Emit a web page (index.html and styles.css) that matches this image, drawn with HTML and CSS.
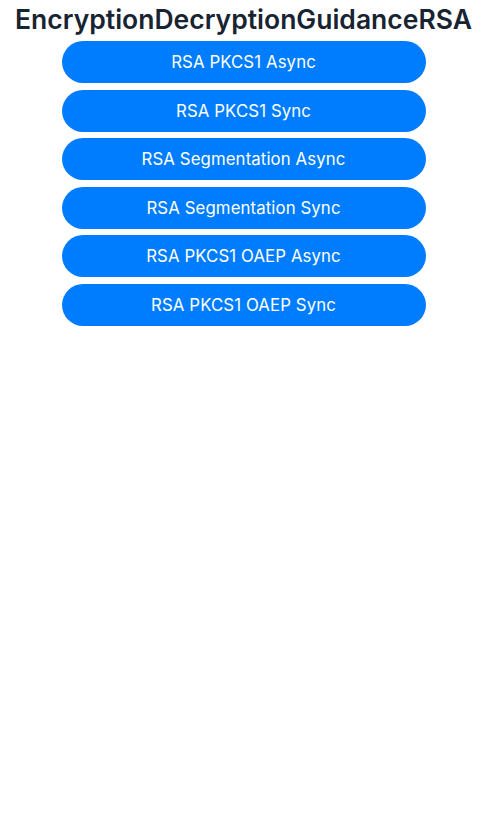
FILE: index.html
```html
<!DOCTYPE html>
<html>
<head>
<meta charset="utf-8">
<link rel="stylesheet" href="styles.css">
</head>
<body>
<main class="page">
  <h1 class="title">EncryptionDecryptionGuidanceRSA</h1>
  <div class="buttons">
    <button class="btn">RSA PKCS1 Async</button>
    <button class="btn">RSA PKCS1 Sync</button>
    <button class="btn">RSA Segmentation Async</button>
    <button class="btn">RSA Segmentation Sync</button>
    <button class="btn">RSA PKCS1 OAEP Async</button>
    <button class="btn">RSA PKCS1 OAEP Sync</button>
  </div>
</main>
</body>
</html>
```
FILE: styles.css
```css
html, body {
  margin: 0;
  padding: 0;
  background: #ffffff;
}
.page {
  display: flex;
  flex-direction: column;
  align-items: center;
  font-family: "Inter", "Noto Sans", sans-serif;
}
.title {
  margin: 0;
  padding-top: 2px;
  font-size: 26.5px;
  line-height: 34px;
  font-weight: 600;
  color: #182431;
  letter-spacing: 0;
  white-space: nowrap;
}
.buttons {
  display: flex;
  flex-direction: column;
  gap: 6.5px;
  margin-top: 5px;
}
.btn {
  width: 364px;
  height: 42px;
  border: none;
  border-radius: 21px;
  background: #007dff;
  color: #ffffff;
  font-family: "Inter", "Noto Sans", sans-serif;
  font-size: 16.8px;
  font-weight: 400;
  letter-spacing: 0.1px;
  padding: 0;
}
```
